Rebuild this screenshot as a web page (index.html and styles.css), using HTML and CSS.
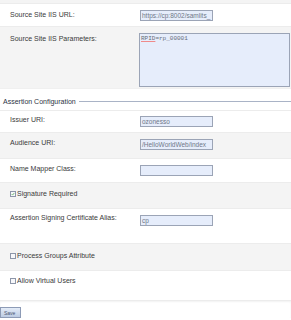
FILE: index.html
```html
<!DOCTYPE html>
<html>
<head>
<meta charset="utf-8">
<link rel="stylesheet" href="styles.css">
</head>
<body>
<div class="form">
  <div class="row alt strip"></div>
  <div class="row r-url">
    <div class="lbl">Source Site IIS URL:</div>
    <div class="box">https://cp:8002/samlits_</div>
  </div>
  <div class="row alt r-params">
    <div class="lbl">Source Site IIS Parameters:</div>
    <div class="area"><span class="spell">RPID</span>=rp_00001</div>
  </div>
  <div class="section">
    <span class="legend">Assertion Configuration</span>
    <span class="rule"></span>
  </div>
  <div class="row r-issuer">
    <div class="lbl">Issuer URI:</div>
    <div class="box">ozonesso</div>
  </div>
  <div class="row alt r-aud">
    <div class="lbl">Audience URI:</div>
    <div class="box">/HelloWorldWeb/index</div>
  </div>
  <div class="row r-mapper">
    <div class="lbl">Name Mapper Class:</div>
    <div class="box"></div>
  </div>
  <div class="row alt r-sig">
    <div class="chk-line"><span class="chk checked"><svg viewBox="0 0 6 6" width="6" height="6"><path d="M1 3.2 L2.4 4.6 L5 1.4" fill="none" stroke="#3aa03a" stroke-width="1"/></svg></span>Signature Required</div>
  </div>
  <div class="row r-alias">
    <div class="lbl">Assertion Signing Certificate Alias:</div>
    <div class="box">cp</div>
  </div>
  <div class="row alt r-groups">
    <div class="chk-line"><span class="chk"></span>Process Groups Attribute</div>
  </div>
  <div class="row r-virtual">
    <div class="chk-line"><span class="chk"></span>Allow Virtual Users</div>
  </div>
  <div class="actions">
    <button class="btn" type="button">Save</button>
  </div>
</div>
</body>
</html>
```
FILE: styles.css
```css
* { box-sizing: border-box; }
html, body { margin: 0; padding: 0; background: #fff; }
body {
  font-family: "Liberation Sans", Arial, sans-serif;
  font-size: 7px;
  color: #3a3a3a;
  width: 291px;
  height: 320px;
  overflow: hidden;
}
.form { display: flex; flex-direction: column; }
.row {
  display: grid;
  grid-template-columns: 139px 1fr;
  align-items: start;
  border-top: 1px solid #ececec;
  background: #fff;
}
.row.alt { background: #f4f4f4; }
.strip { height: 3px; border-top: 0; }
.lbl { padding-left: 10px; white-space: nowrap; line-height: 8px; }
.box {
  width: 73px;
  height: 11px;
  margin-left: 1px;
  border: 1px solid #9ba4b6;
  background: #e6edfb;
  color: #707888;
  font-size: 6.5px;
  line-height: 9px;
  padding-left: 1px;
  white-space: nowrap;
  overflow: hidden;
}
.area {
  width: 151px;
  height: 54px;
  border: 1px solid #9ba4b6;
  background: #e6edfb;
  color: #666c78;
  font-family: "Liberation Mono", "Courier New", monospace;
  font-size: 6px;
  line-height: 8px;
  padding: 1px 1px;
}
.spell { text-decoration: underline solid #f08a8a; text-decoration-thickness: 1px; text-underline-offset: 1px; }

.r-url { height: 23px; }
.r-url .lbl { margin-top: 7px; }
.r-url .box { margin-top: 6px; }

.r-params { height: 62px; }
.r-params .lbl { margin-top: 8px; }
.r-params .area { margin-top: 6px; }

.section {
  height: 22px;
  display: flex;
  align-items: center;
  gap: 3px;
  padding-left: 3px;
  padding-top: 4px;
  border-top: 1px solid #f0f0f0;
}
.legend { white-space: nowrap; color: #2c3444; line-height: 8px; }
.rule { flex: 1; height: 1px; background: #a9b3c6; }

.r-issuer { height: 22px; }
.r-issuer .lbl { margin-top: 5px; }
.r-issuer .box { margin-top: 5px; }

.r-aud { height: 26px; }
.r-aud .lbl { margin-top: 6px; }
.r-aud .box { margin-top: 6px; }

.r-mapper { height: 24px; }
.r-mapper .lbl { margin-top: 6px; }
.r-mapper .box { margin-top: 6px; }

.r-sig { height: 26px; grid-template-columns: 1fr; }
.r-alias { height: 35px; }
.r-alias .lbl { margin-top: 5px; }
.r-alias .box { margin-top: 6px; }
.r-groups { height: 27px; grid-template-columns: 1fr; }
.r-virtual { height: 30px; grid-template-columns: 1fr; }

.chk-line {
  display: flex;
  align-items: center;
  padding-left: 10px;
  margin-top: 7px;
  white-space: nowrap;
  line-height: 8px;
}
.r-groups .chk-line { margin-top: 8px; }
.r-virtual .chk-line { margin-top: 6px; }
.chk {
  width: 6px;
  height: 6px;
  border: 1px solid #8d96a9;
  background: #f7f8fb;
  display: inline-flex;
  align-items: center;
  justify-content: center;
  margin-right: 1px;
  flex: none;
}
.chk svg { display: block; }

.actions {
  border-top: 1px solid #ececec;
  box-shadow: inset 0 1px 2px #f2f2f2;
  padding-top: 6px;
}
.btn {
  width: 21px;
  height: 11px;
  padding: 0 0 0 3px;
  margin: 0;
  text-align: left;
  font-family: "Liberation Sans", Arial, sans-serif;
  font-size: 5px;
  color: #4a5470;
  border: 1px solid #8d9bb6;
  background: linear-gradient(#e4ecf8, #bccbe2);
  border-radius: 0;
}
```
